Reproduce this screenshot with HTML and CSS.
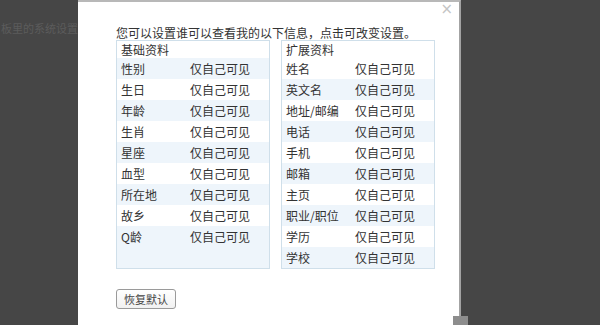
FILE: index.html
```html
<!DOCTYPE html>
<html>
    <head>
        <meta charset="UTF-8">
        <title>隐私设置</title>
        <link rel="stylesheet" href="styles.css">
    </head>
    <body>
        <div class="page">
            <div class="behind">
                <p class="behind-text">板里的系统设置</p>
            </div>
            <div class="dialog">
                <span class="close">×</span>
                <p class="tip">您可以设置谁可以查看我的以下信息，点击可改变设置。</p>
                <div class="panels">
                    <div class="panel">
                        <div class="panel-head">基础资料</div>
                        <ul class="rows odd-first">
                            <li><span class="label">性别</span><span class="value">仅自己可见</span></li>
                            <li><span class="label">生日</span><span class="value">仅自己可见</span></li>
                            <li><span class="label">年龄</span><span class="value">仅自己可见</span></li>
                            <li><span class="label">生肖</span><span class="value">仅自己可见</span></li>
                            <li><span class="label">星座</span><span class="value">仅自己可见</span></li>
                            <li><span class="label">血型</span><span class="value">仅自己可见</span></li>
                            <li><span class="label">所在地</span><span class="value">仅自己可见</span></li>
                            <li><span class="label">故乡</span><span class="value">仅自己可见</span></li>
                            <li><span class="label">Q龄</span><span class="value">仅自己可见</span></li>
                        </ul>
                    </div>
                    <div class="panel">
                        <div class="panel-head">扩展资料</div>
                        <ul class="rows even-first">
                            <li><span class="label">姓名</span><span class="value">仅自己可见</span></li>
                            <li><span class="label">英文名</span><span class="value">仅自己可见</span></li>
                            <li><span class="label">地址/邮编</span><span class="value">仅自己可见</span></li>
                            <li><span class="label">电话</span><span class="value">仅自己可见</span></li>
                            <li><span class="label">手机</span><span class="value">仅自己可见</span></li>
                            <li><span class="label">邮箱</span><span class="value">仅自己可见</span></li>
                            <li><span class="label">主页</span><span class="value">仅自己可见</span></li>
                            <li><span class="label">职业/职位</span><span class="value">仅自己可见</span></li>
                            <li><span class="label">学历</span><span class="value">仅自己可见</span></li>
                            <li><span class="label">学校</span><span class="value">仅自己可见</span></li>
                        </ul>
                    </div>
                </div>
                <button class="reset">恢复默认</button>
            </div>
            <div class="scroll-nub"></div>
        </div>
    </body>
</html>
```

FILE: styles.css
```css
* {
    padding: 0;
    margin: 0;
    box-sizing: border-box;
}

ul,
li {
    list-style: none;
}

html,
body {
    height: 100%;
    overflow: hidden;
}

body {
    background-color: #464646;
    font-family: "Noto Sans CJK SC", "Liberation Sans", sans-serif;
    font-size: 12px;
    color: #333;
}

.page {
    display: flex;
    height: 325px;
    position: relative;
}

.behind {
    width: 78px;
    flex-shrink: 0;
    overflow: hidden;
    padding-top: 21px;
}

.behind-text {
    white-space: nowrap;
    text-align: right;
    font-size: 11px;
    line-height: 14px;
    color: #5c5c5c;
}

.dialog {
    position: relative;
    width: 383px;
    flex-shrink: 0;
    background-color: #fff;
    border-top: 2px solid #b8b8b8;
    border-right: 2px solid #a3a3a3;
    padding: 24px 0 0 38px;
}

.close {
    position: absolute;
    right: 6px;
    top: 0;
    font-size: 15px;
    line-height: 15px;
    color: #c4c4c4;
    font-family: "DejaVu Sans", sans-serif;
}

.tip {
    line-height: 14px;
    white-space: nowrap;
}

.panels {
    display: flex;
    gap: 11px;
}

.panel {
    width: 154px;
    height: 229px;
    border: 1px solid #cfdfea;
    background-color: #eef5fb;
}

.panel-head {
    height: 17px;
    line-height: 17px;
    padding-left: 4px;
    background-color: #fff;
}

.rows li {
    display: flex;
    height: 21px;
    line-height: 21px;
    padding-left: 4px;
}

.odd-first li:nth-child(even),
.even-first li:nth-child(odd) {
    background-color: #fff;
}

.odd-first li:nth-child(odd),
.even-first li:nth-child(even) {
    background-color: #eef5fb;
}

.label {
    width: 69px;
    flex-shrink: 0;
}

.reset {
    display: block;
    margin-top: 20px;
    width: 60px;
    height: 20px;
    border: 1px solid #9a9a9a;
    border-radius: 3px;
    background: linear-gradient(#fff, #f1f1f1);
    font-family: "Noto Sans CJK SC", sans-serif;
    font-size: 11px;
    color: #444;
}

.scroll-nub {
    position: absolute;
    left: 453px;
    top: 316px;
    width: 15px;
    height: 9px;
    background-color: #8d8d8d;
}
```
